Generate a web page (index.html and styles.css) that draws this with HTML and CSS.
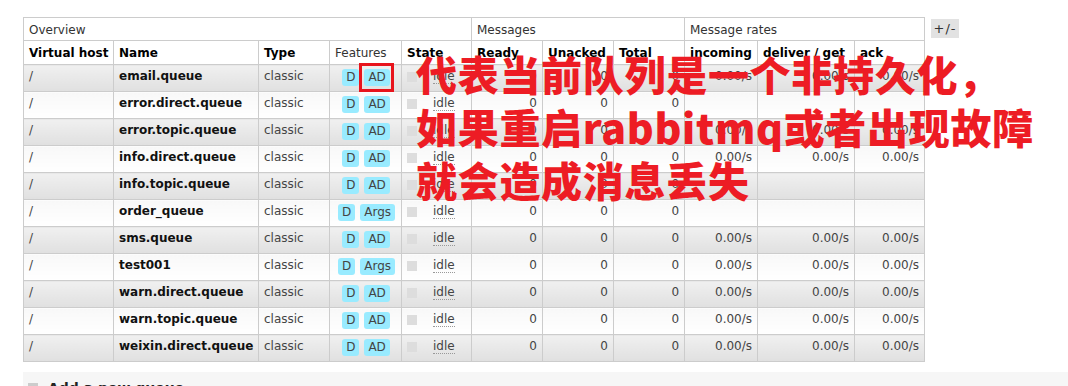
FILE: index.html
```html
<!DOCTYPE html>
<html lang="zh-CN">
<head>
<meta charset="utf-8">
<title>Queues</title>
<link rel="stylesheet" href="styles.css">
</head>
<body>
<div class="page">
  <div class="wrap">
    <table class="list">
      <colgroup>
        <col class="c-vh"><col class="c-name"><col class="c-type"><col class="c-feat"><col class="c-state">
        <col class="c-num"><col class="c-num"><col class="c-num">
        <col class="c-in"><col class="c-del"><col class="c-ack">
      </colgroup>
      <thead>
        <tr class="group">
          <th colspan="5">Overview</th>
          <th colspan="3">Messages</th>
          <th colspan="3">Message rates</th>
        </tr>
        <tr class="cols">
          <th>Virtual host</th><th>Name</th><th>Type</th><th class="plain">Features</th><th>State</th>
          <th>Ready</th><th>Unacked</th><th>Total</th>
          <th>incoming</th><th>deliver / get</th><th>ack</th>
        </tr>
      </thead>
      <tbody>
        <tr class="alt1"><td>/</td><td class="name">email.queue</td><td>classic</td><td class="feat"><span class="tag">D</span><span class="tag">AD</span></td><td><span class="sq"></span><span class="idle">idle</span></td><td class="r">0</td><td class="r">0</td><td class="r">0</td><td class="r">0.00/s</td><td class="r">0.00/s</td><td class="r">0.00/s</td></tr>
        <tr class="alt2"><td>/</td><td class="name">error.direct.queue</td><td>classic</td><td class="feat"><span class="tag">D</span><span class="tag">AD</span></td><td><span class="sq"></span><span class="idle">idle</span></td><td class="r">0</td><td class="r">0</td><td class="r">0</td><td></td><td></td><td></td></tr>
        <tr class="alt1"><td>/</td><td class="name">error.topic.queue</td><td>classic</td><td class="feat"><span class="tag">D</span><span class="tag">AD</span></td><td><span class="sq"></span><span class="idle">idle</span></td><td class="r">0</td><td class="r">0</td><td class="r">0</td><td class="r">0.00/s</td><td class="r">0.00/s</td><td class="r">0.00/s</td></tr>
        <tr class="alt2"><td>/</td><td class="name">info.direct.queue</td><td>classic</td><td class="feat"><span class="tag">D</span><span class="tag">AD</span></td><td><span class="sq"></span><span class="idle">idle</span></td><td class="r">0</td><td class="r">0</td><td class="r">0</td><td class="r">0.00/s</td><td class="r">0.00/s</td><td class="r">0.00/s</td></tr>
        <tr class="alt1"><td>/</td><td class="name">info.topic.queue</td><td>classic</td><td class="feat"><span class="tag">D</span><span class="tag">AD</span></td><td><span class="sq"></span><span class="idle">idle</span></td><td class="r">0</td><td class="r">0</td><td class="r">0</td><td></td><td></td><td></td></tr>
        <tr class="alt2"><td>/</td><td class="name">order_queue</td><td>classic</td><td class="feat"><span class="tag">D</span><span class="tag">Args</span></td><td><span class="sq"></span><span class="idle">idle</span></td><td class="r">0</td><td class="r">0</td><td class="r">0</td><td></td><td></td><td></td></tr>
        <tr class="alt1"><td>/</td><td class="name">sms.queue</td><td>classic</td><td class="feat"><span class="tag">D</span><span class="tag">AD</span></td><td><span class="sq"></span><span class="idle">idle</span></td><td class="r">0</td><td class="r">0</td><td class="r">0</td><td class="r">0.00/s</td><td class="r">0.00/s</td><td class="r">0.00/s</td></tr>
        <tr class="alt2"><td>/</td><td class="name">test001</td><td>classic</td><td class="feat"><span class="tag">D</span><span class="tag">Args</span></td><td><span class="sq"></span><span class="idle">idle</span></td><td class="r">0</td><td class="r">0</td><td class="r">0</td><td class="r">0.00/s</td><td class="r">0.00/s</td><td class="r">0.00/s</td></tr>
        <tr class="alt1"><td>/</td><td class="name">warn.direct.queue</td><td>classic</td><td class="feat"><span class="tag">D</span><span class="tag">AD</span></td><td><span class="sq"></span><span class="idle">idle</span></td><td class="r">0</td><td class="r">0</td><td class="r">0</td><td class="r">0.00/s</td><td class="r">0.00/s</td><td class="r">0.00/s</td></tr>
        <tr class="alt2"><td>/</td><td class="name">warn.topic.queue</td><td>classic</td><td class="feat"><span class="tag">D</span><span class="tag">AD</span></td><td><span class="sq"></span><span class="idle">idle</span></td><td class="r">0</td><td class="r">0</td><td class="r">0</td><td class="r">0.00/s</td><td class="r">0.00/s</td><td class="r">0.00/s</td></tr>
        <tr class="alt1"><td>/</td><td class="name">weixin.direct.queue</td><td>classic</td><td class="feat"><span class="tag">D</span><span class="tag">AD</span></td><td><span class="sq"></span><span class="idle">idle</span></td><td class="r">0</td><td class="r">0</td><td class="r">0</td><td class="r">0.00/s</td><td class="r">0.00/s</td><td class="r">0.00/s</td></tr>
      </tbody>
    </table>
    <span class="pm">+/-</span>
  </div>
  <div class="section">
    <h2><span class="toggle"></span>Add a new queue</h2>
  </div>
  <div class="mark"></div>
  <div class="note">代表当前队列是一个非持久化，<br>如果重启rabbitmq或者出现故障<br>就会造成消息丢失</div>
</div>
</body>
</html>
```

FILE: styles.css
```css
html, body {
  margin: 0;
  padding: 0;
  background: #fff;
}
body {
  font-family: "DejaVu Sans", Verdana, sans-serif;
  font-size: 12px;
  color: #444;
  overflow: hidden;
}
.page {
  position: relative;
  padding: 17px 0 0 23px;
}
.wrap {
  display: flex;
  align-items: flex-start;
  gap: 6px;
}
table.list {
  border-collapse: collapse;
  table-layout: fixed;
  width: 901px;
}
.c-vh { width: 90px; }
.c-name { width: 145px; }
.c-type { width: 71px; }
.c-feat { width: 72px; }
.c-state { width: 70px; }
.c-num { width: 71px; }
.c-in { width: 73px; }
.c-del { width: 97px; }
.c-ack { width: 70px; }

table.list th,
table.list td {
  border: 1px solid #ccc;
  line-height: 14px;
  white-space: nowrap;
  overflow: hidden;
}
table.list th {
  text-align: left;
  background: #fff;
  padding: 1px 5px 0;
  vertical-align: middle;
}
tr.group th {
  height: 21px;
  font-weight: normal;
  color: #333;
}
tr.cols th {
  height: 22px;
  font-weight: bold;
  color: #000;
}
tr.cols th.plain {
  font-weight: normal;
  color: #333;
}
table.list td {
  height: 20px;
  padding: 4px 5px 2px 5px;
  vertical-align: top;
}
tr.alt1 td {
  background: linear-gradient(#f0f0f0, #e0e0e0);
}
tr.alt2 td {
  background: linear-gradient(#f8f8f8, #ffffff);
}
td.name {
  font-weight: bold;
  color: #111;
}
td.r {
  text-align: right;
}
td.feat {
  text-align: center;
  padding-left: 0;
  padding-right: 0;
}
.tag {
  display: inline-block;
  background: #99ebff;
  color: #444;
  border-radius: 3px;
  padding: 1px 4px 2px;
  line-height: 14px;
  margin: 0 2px 0 3px;
}
.sq {
  display: inline-block;
  width: 10px;
  height: 10px;
  background: #ddd;
  margin-right: 16px;
  vertical-align: -2px;
}
.idle {
  border-bottom: 1px dotted #999;
}
.pm {
  margin-top: 2px;
  display: block;
  width: 28px;
  height: 19px;
  line-height: 19px;
  text-align: center;
  background: #e2e2e2;
  color: #333;
  font-size: 13px;
  letter-spacing: 1px;
}
.section {
  margin-top: 10px;
  background: #f6f6f6;
  padding: 8px 5px;
}
.section h2 {
  margin: 0;
  font-size: 14px;
  font-weight: bold;
  color: #222;
  display: flex;
  align-items: center;
  gap: 10px;
}
.toggle {
  display: inline-block;
  width: 10px;
  height: 10px;
  background: #ccc;
}
.mark {
  position: absolute;
  left: 359px;
  top: 63px;
  width: 29px;
  height: 23px;
  border: 3px solid #e8141c;
}
.note {
  position: absolute;
  left: 416px;
  top: 47px;
  font-family: "Noto Sans CJK SC", sans-serif;
  font-weight: 900;
  font-size: 41px;
  line-height: 53px;
  letter-spacing: 0.7px;
  color: #ed1c24;
  white-space: nowrap;
}
```
